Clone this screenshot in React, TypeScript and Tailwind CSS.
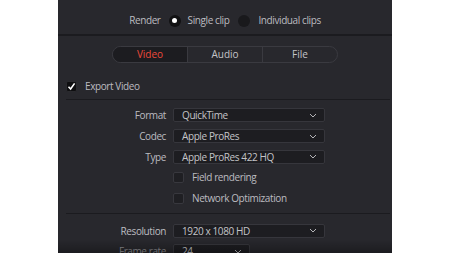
import React from 'react';

const font = { fontFamily: '"Open Sans", "Noto Sans", sans-serif' };

const Chevron: React.FC = () => (
  <svg width="8" height="5" viewBox="0 0 8 5" className="shrink-0">
    <path d="M1 1 L4 4 L7 1" fill="none" stroke="#b4b4b8" strokeWidth="1" />
  </svg>
);

const Select: React.FC<{ value: string; wide?: boolean }> = ({ value, wide = true }) => (
  <div
    className={`flex h-[14px] shrink-0 items-center justify-between rounded-[2px] border border-[#36363c] bg-[#1d1d21] pl-[8px] pr-[7px] text-[10px] tracking-[-0.4px] text-[#c4c4c8] ${
      wide ? 'w-[152px]' : 'w-[77px]'
    }`}
  >
    <span className="leading-none">{value}</span>
    <Chevron />
  </div>
);

const Box: React.FC<{ checked?: boolean }> = ({ checked }) => (
  <div
    className={`flex h-[11px] w-[11px] shrink-0 items-center justify-center rounded-[2px] border ${
      checked ? 'border-[#2a2a2e] bg-[#0e0e10]' : 'border-[#38383e] bg-[#1f1f23]'
    }`}
  >
    {checked && (
      <svg width="9" height="9" viewBox="0 0 9 9">
        <path d="M1.5 4.8 L3.6 7 L7.6 1.4" fill="none" stroke="#ffffff" strokeWidth="1.6" />
      </svg>
    )}
  </div>
);

const Row: React.FC<{ label?: string; children: React.ReactNode; dim?: boolean }> = ({ label, children, dim }) => (
  <div className="flex h-[20.7px] items-center gap-[7px]">
    <div
      className={`w-[108px] shrink-0 text-right text-[10px] leading-none tracking-[-0.4px] ${
        dim ? 'text-[#8e8e92]' : 'text-[#bcbcc0]'
      }`}
    >
      {label}
    </div>
    {children}
  </div>
);

const tabs = ['Video', 'Audio', 'File'];

export default function App() {
  return (
    <div className="flex h-[253px] w-[450px] justify-center overflow-hidden bg-white" style={font}>
      <div className="relative w-[334px] bg-[#28282d]">
        {/* render mode */}
        <div className="flex h-[36px] items-center justify-center border-b-2 border-[#1b1b1f] pt-[7px] text-[10px] tracking-[-0.4px] text-[#bcbcc0]">
          <span>Render</span>
          <span className="ml-[8px] flex h-[12px] w-[12px] items-center justify-center rounded-full bg-[#111113]">
            <span className="h-[5px] w-[5px] rounded-full bg-white" />
          </span>
          <span className="ml-[7px]">Single clip</span>
          <span className="ml-[9px] h-[12px] w-[12px] rounded-full bg-[#19191c]" />
          <span className="ml-[8px]">Individual clips</span>
        </div>

        {/* tabs */}
        <div className="mt-[10px] flex justify-center">
          <div className="flex h-[17px] w-[226px] overflow-hidden rounded-full border border-[#3a3a40] text-[10px]">
            {tabs.map((t, i) => (
              <div
                key={t}
                className={`flex flex-1 items-center justify-center ${i > 0 ? 'border-l border-[#3a3a40]' : ''} ${
                  i === 0 ? 'bg-[#1c1c20] text-[#ec4a3b]' : 'text-[#c4c4c8]'
                }`}
              >
                {t}
              </div>
            ))}
          </div>
        </div>

        {/* export video */}
        <div className="mt-[16px] flex items-center gap-[8px] pl-[8px] text-[10px] tracking-[-0.4px] text-[#bcbcc0]">
          <Box checked />
          <span>Export Video</span>
        </div>
        <div className="ml-[8px] mr-[2px] mt-[5px] h-px bg-[#1b1b1f]" />

        <div className="mt-[5px]">
          <Row label="Format">
            <Select value="QuickTime" />
          </Row>
          <Row label="Codec">
            <Select value="Apple ProRes" />
          </Row>
          <Row label="Type">
            <Select value="Apple ProRes 422 HQ" />
          </Row>
          <Row>
            <Box />
            <span className="ml-px text-[10px] tracking-[-0.4px] text-[#bcbcc0]">Field rendering</span>
          </Row>
          <Row>
            <Box />
            <span className="ml-px text-[10px] tracking-[-0.4px] text-[#bcbcc0]">Network Optimization</span>
          </Row>
        </div>
        <div className="ml-[8px] mr-[2px] mt-[5px] h-px bg-[#1b1b1f]" />

        <div className="mt-[6px]">
          <Row label="Resolution">
            <Select value="1920 x 1080 HD" />
          </Row>
          <Row label="Frame rate" dim>
            <Select value="24" wide={false} />
          </Row>
        </div>

        <div className="pointer-events-none absolute bottom-0 left-0 right-0 h-[14px] bg-gradient-to-b from-transparent to-[#000000]/30" />
      </div>
    </div>
  );
}
